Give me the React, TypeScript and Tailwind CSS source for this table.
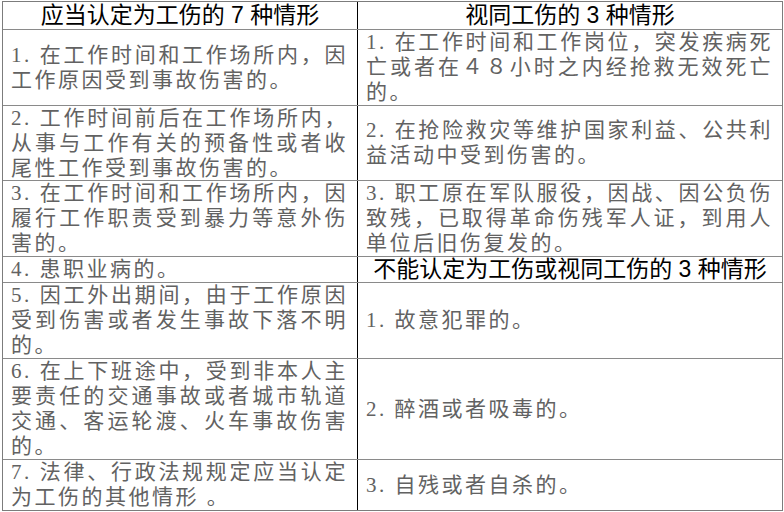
import React from 'react'

type Row = {
  h: string
  left: string[]
  right: string[]
  rightHeader?: boolean
}

// heights include the 1px top border (border-box)
const rows: Row[] = [
  {
    h: 'h-[76px]',
    left: ['1. 在工作时间和工作场所内，因', '工作原因受到事故伤害的。'],
    right: ['1. 在工作时间和工作岗位，突发疾病死', '亡或者在４８小时之内经抢救无效死亡', '的。'],
  },
  {
    h: 'h-[75px]',
    left: ['2. 工作时间前后在工作场所内，', '从事与工作有关的预备性或者收', '尾性工作受到事故伤害的。'],
    right: ['2. 在抢险救灾等维护国家利益、公共利', '益活动中受到伤害的。'],
  },
  {
    h: 'h-[76px]',
    left: ['3. 在工作时间和工作场所内，因', '履行工作职责受到暴力等意外伤', '害的。'],
    right: ['3. 职工原在军队服役，因战、因公负伤', '致残，已取得革命伤残军人证，到用人', '单位后旧伤复发的。'],
  },
  {
    h: 'h-[26px]',
    left: ['4. 患职业病的。'],
    right: ['不能认定为工伤或视同工伤的 3 种情形'],
    rightHeader: true,
  },
  {
    h: 'h-[76px]',
    left: ['5. 因工外出期间，由于工作原因', '受到伤害或者发生事故下落不明', '的。'],
    right: ['1. 故意犯罪的。'],
  },
  {
    h: 'h-[101px]',
    left: ['6. 在上下班途中，受到非本人主', '要责任的交通事故或者城市轨道', '交通、客运轮渡、火车事故伤害', '的。'],
    right: ['2. 醉酒或者吸毒的。'],
  },
  {
    h: 'h-[51px]',
    left: ['7. 法律、行政法规规定应当认定', '为工伤的其他情形 。'],
    right: ['3. 自残或者自杀的。'],
  },
]

const body =
  "font-['Liberation_Serif','Noto_Sans_CJK_SC',serif] text-[21px] leading-[25px] tracking-[2.5px] text-[#626262]"
const head =
  "font-['Liberation_Sans','Noto_Sans_CJK_SC',sans-serif] text-[23px] leading-[25px] text-black text-center"

function Lines({ lines }: { lines: string[] }) {
  return (
    <>
      {lines.map((l, i) => (
        <div key={i} className={i < lines.length - 1 ? '[text-align-last:justify]' : ''}>
          {l}
        </div>
      ))}
    </>
  )
}

export default function App() {
  return (
    <div className="w-[784px] h-[512px] bg-white pt-px pl-[2px]">
      <div className="w-[781px] border border-[#7c7c7c]">
        <div className="flex h-[27px]">
          <div className={`w-[355px] shrink-0 border-r border-black flex items-center justify-center ${head}`}>
            应当认定为工伤的 7 种情形
          </div>
          <div className={`flex-1 flex items-center justify-center ${head}`}>视同工伤的 3 种情形</div>
        </div>
        {rows.map((r, i) => (
          <div key={i} className={`flex border-t border-[#8a8a8a] ${r.h}`}>
            <div className={`w-[355px] shrink-0 border-r border-black pl-2 pr-[9px] flex flex-col justify-center ${body}`}>
              <Lines lines={r.left} />
            </div>
            {r.rightHeader ? (
              <div className={`flex-1 flex items-center justify-center ${head}`}>{r.right[0]}</div>
            ) : (
              <div className={`flex-1 pl-2 pr-[9px] flex flex-col justify-center ${body}`}>
                <Lines lines={r.right} />
              </div>
            )}
          </div>
        ))}
      </div>
    </div>
  )
}
